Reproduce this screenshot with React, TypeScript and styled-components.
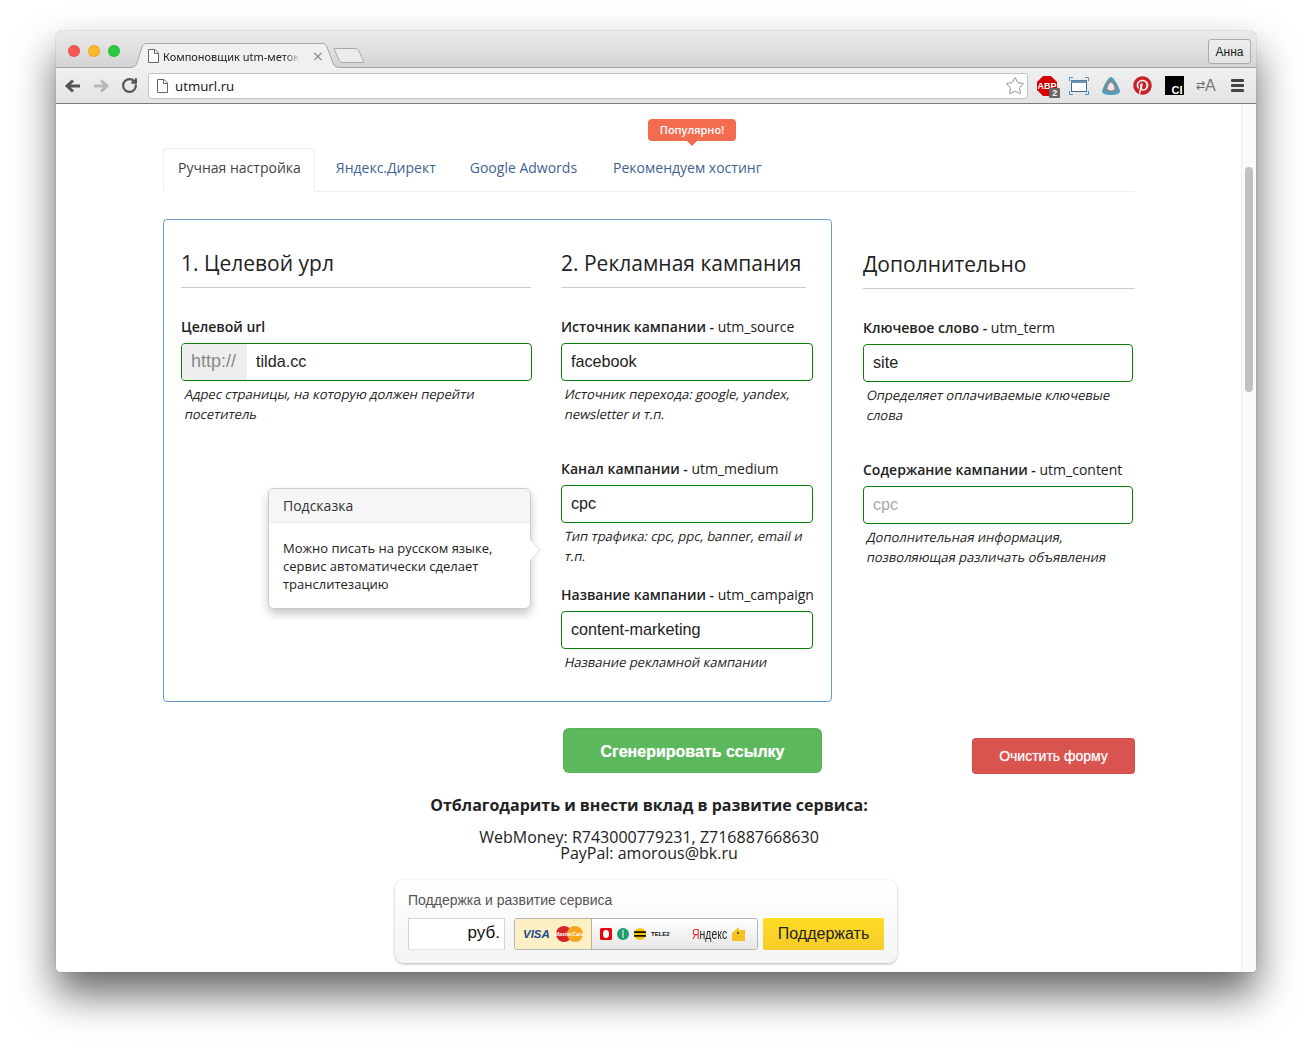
import styled, { createGlobalStyle } from "styled-components";
import { RotateCw, Star } from "lucide-react";
import { FaPinterest } from "react-icons/fa";

const GlobalStyle = createGlobalStyle`
  html, body {
    margin: 0;
    padding: 0;
    height: 1052px;
    overflow: hidden;
    background: #fff;
    font-family: "Open Sans", sans-serif;
    color: #222;
  }
  * { box-sizing: border-box; }
`;

const Page = styled.div`
  padding: 31px 56px 0;
`;

const Window = styled.div`
  width: 1200px;
  height: 941px;
  display: flex;
  flex-direction: column;
  border-radius: 6px 6px 4px 4px;
  overflow: hidden;
  background: #fff;
  box-shadow: 0 22px 40px rgba(0, 0, 0, 0.6), 0 0 1px rgba(0, 0, 0, 0.6);
`;

const TitleBar = styled.div`
  height: 37px;
  flex: none;
  display: flex;
  align-items: flex-start;
  padding-left: 12px;
  background: linear-gradient(#ebebeb, #d4d4d4);
  border-bottom: 1px solid #a6a6a6;
`;

const Lights = styled.div`
  display: flex;
  gap: 8px;
  margin-top: 14px;
`;

const Light = styled.span<{ $color: string }>`
  width: 12px;
  height: 12px;
  border-radius: 50%;
  background: ${(p) => p.$color};
  box-shadow: inset 0 0 0 1px rgba(0, 0, 0, 0.08);
`;

const BrowserTab = styled.div`
  position: relative;
  width: 210px;
  height: 25px;
  margin: 12px 0 0 10px;
  display: flex;
  align-items: center;
  padding: 1px 0 0 18px;
`;

const TabShape = styled.svg`
  position: absolute;
  left: 0;
  top: 0;
`;

const TabTitle = styled.span`
  position: relative;
  width: 138px;
  margin-left: 4px;
  overflow: hidden;
  white-space: nowrap;
  font: 11px "Noto Sans", sans-serif;
  color: #222;
  -webkit-mask-image: linear-gradient(to right, #000 88%, transparent);
  mask-image: linear-gradient(to right, #000 88%, transparent);
`;

const TabClose = styled.span`
  position: relative;
  margin-left: 11px;
  font: 14px "DejaVu Sans", sans-serif;
  color: #888;
`;

const NewTab = styled.svg`
  margin: 16px 0 0 -7px;
  position: relative;
`;

const UserButton = styled.div`
  margin: 8px 5px 0 auto;
  width: 43px;
  height: 25px;
  display: flex;
  align-items: center;
  justify-content: center;
  border: 1px solid #aaa;
  border-radius: 3px;
  font: 12px "Liberation Sans", sans-serif;
  color: #222;
  background: linear-gradient(#efefef, #e3e3e3);
`;

const ToolBar = styled.div`
  height: 36px;
  flex: none;
  display: flex;
  align-items: center;
  padding: 0 0 0 3px;
  background: linear-gradient(#f0f0f0, #e4e4e4);
  border-bottom: 1px solid #7d7d7d;
`;

const NavIcon = styled.span`
  width: 28px;
  height: 20px;
  display: flex;
  align-items: center;
  justify-content: center;
`;

const Omnibox = styled.div`
  width: 880px;
  height: 26px;
  margin-left: 5px;
  display: flex;
  align-items: center;
  padding: 0 2px 0 8px;
  background: #fff;
  border: 1px solid #c4c4c4;
  border-radius: 3px;
  font: 13.3px "Open Sans", sans-serif;
  color: #111;
`;

const Url = styled.span`
  margin-left: 7px;
  flex: 1;
`;

const Extensions = styled.div`
  display: flex;
  align-items: center;
  margin-left: 3.5px;
`;

const Ext = styled.span`
  position: relative;
  width: 31.7px;
  height: 24px;
  display: flex;
  align-items: center;
  justify-content: center;
  color: #cb2027;
`;

const AbpBadge = styled.span`
  position: absolute;
  right: 3px;
  bottom: 0;
  width: 11px;
  height: 10px;
  background: #666;
  border-radius: 1px;
  color: #fff;
  font: bold 9px/10px "Liberation Sans", sans-serif;
  text-align: center;
`;

const CiBadge = styled.span`
  width: 19px;
  height: 19px;
  display: flex;
  align-items: flex-end;
  justify-content: flex-end;
  padding-right: 1px;
  background: #000;
  color: #fff;
  font: bold 11px/9px "Liberation Sans", sans-serif;
`;

const Translate = styled.span`
  display: flex;
  align-items: center;
  font: 16px "Liberation Sans", sans-serif;
  color: #777;
  white-space: nowrap;
`;

const TranslateArrows = styled.span`
  font-size: 11px;
  color: #666;
`;

const Burger = styled.span`
  width: 13px;
  margin-left: 1px;
  display: flex;
  flex-direction: column;
  gap: 2px;
`;

const BurgerBar = styled.span`
  height: 3px;
  border-radius: 1px;
  background: #444;
`;

const Viewport = styled.div`
  flex: 1;
  min-height: 0;
  display: flex;
`;

const Content = styled.div`
  flex: 1;
  min-width: 0;
  padding: 44px 106px 0 107px;
`;

const ScrollTrack = styled.div`
  width: 15px;
  flex: none;
  padding: 63px 3px 0 3px;
  background: #fafafa;
  border-left: 1px solid #eee;
`;

const ScrollThumb = styled.div`
  height: 225px;
  border-radius: 4px;
  background: #c1c1c1;
`;

const Tabs = styled.div`
  position: relative;
  height: 44px;
  display: flex;
  border-bottom: 1px solid #eee;
`;

const TabLink = styled.a<{ $active?: boolean; $gap: number }>`
  height: ${(p) => (p.$active ? "44px" : "43px")};
  margin-right: ${(p) => p.$gap}px;
  padding: ${(p) => (p.$active ? "0 13px 5px 14px" : "0 15px 4px")};
  display: flex;
  align-items: center;
  font-size: 14px;
  color: ${(p) => (p.$active ? "#444" : "#3f6391")};
  background: #fff;
  border: 1px solid ${(p) => (p.$active ? "#eee" : "transparent")};
  border-bottom-color: ${(p) => (p.$active ? "#fff" : "transparent")};
  border-radius: 4px 4px 0 0;
`;

const PopularBadge = styled.span`
  position: absolute;
  left: 485px;
  top: -29px;
  width: 88px;
  height: 22px;
  padding-bottom: 2px;
  display: flex;
  align-items: center;
  justify-content: center;
  border-radius: 4px;
  background: #f46c50;
  color: #fff;
  font-size: 11px;
  font-weight: 600;

  &::after {
    content: "";
    position: absolute;
    left: 39px;
    bottom: -5px;
    border: solid transparent;
    border-width: 5px 5px 0;
    border-top-color: #f46c50;
  }
`;

const FormArea = styled.div`
  margin-top: 27px;
  display: flex;
  align-items: flex-start;
`;

const MainBox = styled.div`
  position: relative;
  width: 669px;
  height: 483px;
  padding: 0 0 0 17px;
  display: flex;
  gap: 30px;
  border: 1px solid #6b9bc8;
  border-radius: 4px;
`;

const Column = styled.div<{ $width: number; $side?: boolean }>`
  width: ${(p) => p.$width}px;
  flex: none;
  margin-left: ${(p) => (p.$side ? "31px" : "0")};
  padding-top: ${(p) => (p.$side ? "2px" : "0")};
`;

const Heading = styled.h3<{ $width?: number }>`
  margin: 0 0 29px;
  width: ${(p) => (p.$width ? `${p.$width}px` : "100%")};
  height: 68px;
  padding-top: 27px;
  font-size: 21px;
  font-weight: 400;
  line-height: 33px;
  color: #222;
  white-space: nowrap;
  border-bottom: 1px solid #ccc;
`;

const Field = styled.div<{ $gap: number }>`
  margin-bottom: ${(p) => p.$gap}px;
`;

const Label = styled.div`
  height: 20px;
  margin-bottom: 6px;
  font-size: 14px;
  line-height: 20px;
  white-space: nowrap;
  color: #222;
`;

const LabelStrong = styled.b`
  font-weight: 600;
`;

const InputFrame = styled.div<{ $width?: number }>`
  width: ${(p) => (p.$width ? `${p.$width}px` : "100%")};
  height: 38px;
  display: flex;
  overflow: hidden;
  border: 1px solid #0c800c;
  border-radius: 4px;
  background: #fff;
`;

const Addon = styled.span`
  width: 65px;
  flex: none;
  display: flex;
  align-items: center;
  padding: 0 0 2px 9px;
  background: #eee;
  color: #888;
  font: 18px "Liberation Sans", sans-serif;
`;

const TextInput = styled.input`
  flex: 1;
  min-width: 0;
  height: 100%;
  padding: 0 9px 2px;
  border: 0;
  outline: 0;
  background: transparent;
  font: 16.2px "Liberation Sans", sans-serif;
  color: #222;

  &::placeholder {
    color: #aaa;
    opacity: 1;
  }
`;

const Help = styled.div`
  margin: 3px 0 0;
  padding-left: 3.5px;
  font-size: 13px;
  line-height: 20px;
  color: #222;
`;

// the reference text is a slanted upright face, not the real italic
const HelpLine = styled.span`
  display: block;
  white-space: nowrap;
  transform: skewX(-12deg);
  transform-origin: left center;
`;

const Popover = styled.div`
  position: absolute;
  left: 104px;
  top: 268px;
  width: 263px;
  height: 121px;
  background: #fff;
  border: 1px solid #ccc;
  border-radius: 6px;
  box-shadow: 0 5px 10px rgba(0, 0, 0, 0.22);

  &::before {
    content: "";
    position: absolute;
    right: -11px;
    top: 50px;
    border: solid transparent;
    border-width: 11px 0 11px 11px;
    border-left-color: #ddd;
  }

  &::after {
    content: "";
    position: absolute;
    right: -10px;
    top: 51px;
    border: solid transparent;
    border-width: 10px 0 10px 10px;
    border-left-color: #fff;
  }
`;

const PopoverTitle = styled.div`
  height: 34px;
  padding: 0 14px;
  font-size: 14px;
  line-height: 33px;
  color: #333;
  background: #f6f6f6;
  border-bottom: 1px solid #ebebeb;
  border-radius: 5px 5px 0 0;
`;

const PopoverBody = styled.div`
  padding: 16px 14px;
  font-size: 13px;
  line-height: 18px;
  color: #222;
`;

const Actions = styled.div`
  margin-top: 26px;
  display: flex;
  align-items: flex-start;
`;

const Button = styled.div<{ $color: string; $big?: boolean }>`
  display: flex;
  align-items: center;
  justify-content: center;
  width: ${(p) => (p.$big ? "259px" : "163px")};
  height: ${(p) => (p.$big ? "45px" : "36px")};
  margin: ${(p) => (p.$big ? "0 0 0 400px" : "10px 0 0 auto")};
  padding-top: ${(p) => (p.$big ? "3px" : "0")};
  background: ${(p) => p.$color};
  border-radius: ${(p) => (p.$big ? "6px" : "4px")};
  color: #fff;
  font-family: "Liberation Sans", sans-serif;
  font-size: ${(p) => (p.$big ? "16px" : "14px")};
  font-weight: ${(p) => (p.$big ? 700 : 400)};
  text-shadow: 0 0 1px rgba(255, 255, 255, 0.6);
  box-shadow: inset 0 0 0 1px rgba(0, 0, 0, 0.04);
`;

const Thanks = styled.div`
  margin-top: 20px;
  font-size: 16px;
  font-weight: 700;
  line-height: 22px;
  text-align: center;
  color: #222;
`;

const Wallets = styled.div`
  margin-top: 13px;
  font-size: 16px;
  line-height: 16px;
  text-align: center;
  color: #222;
`;

const Widget = styled.div`
  width: 502px;
  height: 83px;
  margin: 19px 0 0 232px;
  padding: 11px 13px 0;
  border-radius: 9px;
  background: linear-gradient(#fff, #f4f4f4);
  box-shadow: 0 1px 3px rgba(0, 0, 0, 0.3);
`;

const WidgetTitle = styled.div`
  font: 14px/18px "Liberation Sans", sans-serif;
  color: #555;
`;

const WidgetRow = styled.div`
  margin-top: 9px;
  height: 32px;
  display: flex;
`;

const Amount = styled.div`
  width: 97px;
  padding: 3px 4px 0 0;
  text-align: right;
  background: #fff;
  border: 1px solid #d4d4d4;
  border-bottom-color: #e6e6e6;
  font: 17px/22px "Liberation Sans", sans-serif;
  color: #111;
`;

const PaySwitch = styled.div`
  width: 244px;
  margin-left: 9px;
  display: flex;
  border: 1px solid #b5b5b5;
  border-radius: 3px;
  overflow: hidden;
`;

const PayCards = styled.div`
  width: 77px;
  display: flex;
  align-items: center;
  padding-left: 8px;
  gap: 5px;
  background: #fdf0c5;
  border-right: 1px solid #b8b09a;
`;

const Visa = styled.span`
  font: italic bold 11.500px "Liberation Sans", sans-serif;
  color: #1a4a8a;
`;

const PayOther = styled.div`
  flex: 1;
  display: flex;
  align-items: center;
  padding-left: 8px;
  background: linear-gradient(#fff, #e6e6e6);
`;

const PayLogo = styled.svg<{ $gap?: number }>`
  flex: none;
  margin-left: ${(p) => p.$gap ?? 0}px;
`;

const Tele2 = styled.span`
  margin-left: 5px;
  width: 18px;
  font: bold 6px "Liberation Sans", sans-serif;
  color: #111;
`;

const Yandex = styled.span`
  margin-left: 23px;
  width: 35px;
  font: 14.500px "Liberation Sans", sans-serif;
  transform: scaleX(0.72);
  transform-origin: left;
  color: #222;
  white-space: nowrap;
`;

const YandexFirst = styled.span`
  color: #e52620;
`;

const PayButton = styled.div`
  width: 121px;
  margin-left: 5px;
  display: flex;
  align-items: center;
  justify-content: center;
  border-radius: 2px;
  background: linear-gradient(#ffdc24, #f5cc2a);
  font: 16px "Liberation Sans", sans-serif;
  color: #222;
`;

const DocIcon = () => (
  <svg width="11" height="14" viewBox="0 0 11 14" style={{ position: "relative", flex: "none" }}>
    <path d="M.5.5h6.500l3.500 3.500v9.500H.5z" fill="#fff" stroke="#666" />
    <path d="M6.500.5v4h4" fill="none" stroke="#666" />
  </svg>
);

const FormField = ({ strong, rest, value, placeholder, width, gap, help }: {
  strong: string;
  rest?: string;
  value?: string;
  placeholder?: string;
  width?: number;
  gap: number;
  help: string[];
}) => (
  <Field $gap={gap}>
    <Label>
      <LabelStrong>{strong}</LabelStrong>
      {rest}
    </Label>
    <InputFrame $width={width}>
      <TextInput readOnly value={value} placeholder={placeholder} />
    </InputFrame>
    <Help>
      {help.map((line) => (
        <HelpLine key={line}>{line}</HelpLine>
      ))}
    </Help>
  </Field>
);

const App = () => {
  return (
    <>
      <GlobalStyle />
      <Page>
        <Window>
          <TitleBar>
            <Lights>
              <Light $color="#f8584f" />
              <Light $color="#fdb827" />
              <Light $color="#2bc840" />
            </Lights>
            <BrowserTab>
              <TabShape width="210" height="25" viewBox="0 0 210 25">
                <path
                  d="M0 24.500C4 24.500 6 23 7 20L12 4C13 1.500 14 .5 17 .5H192C195 .5 196 1.500 197 4L203 20C204 23 206 24.500 210 24.500V25H0Z"
                  fill="#f0f0f0"
                />
                <path
                  d="M0 24.500C4 24.500 6 23 7 20L12 4C13 1.500 14 .5 17 .5H192C195 .5 196 1.500 197 4L203 20C204 23 206 24.500 210 24.500"
                  fill="none"
                  stroke="#a6a6a6"
                />
              </TabShape>
              <DocIcon />
              <TabTitle>Компоновщик utm-меток</TabTitle>
              <TabClose>×</TabClose>
            </BrowserTab>
            <NewTab width="32" height="17" viewBox="0 0 32 17">
              <path d="M1 1.500H22C24 1.500 25 2.500 26 4L31 15.500H10C8 15.500 7 14.500 6 13Z" fill="#ececec" stroke="#a9a9a9" />
            </NewTab>
            <UserButton>Анна</UserButton>
          </TitleBar>
          <ToolBar>
            <NavIcon>
              <svg width="18" height="16" viewBox="0 0 18 16">
                <path d="M16 8H4M9 2.500L3 8l6 5.500" fill="none" stroke="#555" strokeWidth="3" />
              </svg>
            </NavIcon>
            <NavIcon>
              <svg width="18" height="16" viewBox="0 0 18 16">
                <path d="M2 8h12M9 2.500L15 8l-6 5.500" fill="none" stroke="#b8b8b8" strokeWidth="3" />
              </svg>
            </NavIcon>
            <NavIcon>
              <RotateCw size={17} color="#555" strokeWidth={3.2} />
            </NavIcon>
            <Omnibox>
              <DocIcon />
              <Url>utmurl.ru</Url>
              <Star size={20} color="#8c8c8c" strokeWidth={1.2} />
            </Omnibox>
            <Extensions>
              <Ext>
                <svg width="20" height="20" viewBox="0 0 20 20">
                  <path d="M6 0h8l6 6v8l-6 6H6l-6-6V6z" fill="#d40000" />
                  <text x="10" y="12.500" textAnchor="middle" fontFamily="Liberation Sans" fontWeight="700" fontSize="9" fill="#fff">
                    ABP
                  </text>
                </svg>
                <AbpBadge>2</AbpBadge>
              </Ext>
              <Ext>
                <svg width="20" height="18" viewBox="0 0 20 18">
                  <path d="M.5 4V.5H4M16 .5h3.500V4M.5 14v3.500H4M16 17.500h3.500V14" fill="none" stroke="#4a90c8" />
                  <rect x="2.500" y="3.500" width="15" height="11" fill="#fff" stroke="#3d6f99" />
                  <rect x="2.500" y="3.500" width="15" height="2.500" fill="#6d94b5" />
                </svg>
              </Ext>
              <Ext>
                <svg width="20" height="20" viewBox="0 0 20 20">
                  <path d="M10 1C13 1 19 13 19 15.500C19 18 14 19 10 19S1 18 1 15.500C1 13 7 1 10 1Z" fill="#4aa0bf" />
                  <path d="M10 4C12.500 4 16 10 16 12.500C16 15.500 12.500 16.500 10 16.500S4 15.500 4 12.500C4 10 7.500 4 10 4Z" fill="#888" />
                  <path d="M10 6.500C11.500 6.500 13.500 10.500 13.500 12.500C13.500 14 11.500 14.500 10 14.500S6.500 14 6.500 12.500C6.500 10.500 8.500 6.500 10 6.500Z" fill="#e8e8e8" />
                </svg>
              </Ext>
              <Ext>
                <FaPinterest size={19} />
              </Ext>
              <Ext>
                <CiBadge>CI</CiBadge>
              </Ext>
              <Ext>
                <Translate>
                  <TranslateArrows>⇄</TranslateArrows>A
                </Translate>
              </Ext>
              <Ext>
                <Burger>
                  <BurgerBar />
                  <BurgerBar />
                  <BurgerBar />
                </Burger>
              </Ext>
            </Extensions>
          </ToolBar>
          <Viewport>
            <Content>
              <Tabs>
                <TabLink $active $gap={5}>Ручная настройка</TabLink>
                <TabLink $gap={2}>Яндекс.Директ</TabLink>
                <TabLink $gap={4}>Google Adwords</TabLink>
                <TabLink $gap={2}>Рекомендуем хостинг</TabLink>
                <PopularBadge>Популярно!</PopularBadge>
              </Tabs>
              <FormArea>
                <MainBox>
                  <Column $width={350}>
                    <Heading>1. Целевой урл</Heading>
                    <Field $gap={0}>
                      <Label>
                        <LabelStrong>Целевой url</LabelStrong>
                      </Label>
                      <InputFrame $width={351}>
                        <Addon>http://</Addon>
                        <TextInput readOnly value="tilda.cc" />
                      </InputFrame>
                      <Help>
                        <HelpLine>Адрес страницы, на которую должен перейти</HelpLine>
                        <HelpLine>посетитель</HelpLine>
                      </Help>
                    </Field>
                  </Column>
                  <Column $width={252}>
                    <Heading $width={245}>2. Рекламная кампания</Heading>
                    <FormField
                      gap={35}
                      strong="Источник кампании - "
                      rest="utm_source"
                      value="facebook"
                      help={["Источник перехода: google, yandex,", "newsletter и т.п."]}
                    />
                    <FormField
                      gap={19}
                      strong="Канал кампании - "
                      rest="utm_medium"
                      value="cpc"
                      help={["Тип трафика: cpc, ppc, banner, email и", "т.п."]}
                    />
                    <FormField
                      gap={0}
                      strong="Название кампании - "
                      rest="utm_campaign"
                      value="content-marketing"
                      help={["Название рекламной кампании"]}
                    />
                  </Column>
                  <Popover>
                    <PopoverTitle>Подсказка</PopoverTitle>
                    <PopoverBody>
                      Можно писать на русском языке,
                      <br />
                      сервис автоматически сделает
                      <br />
                      транслитезацию
                    </PopoverBody>
                  </Popover>
                </MainBox>
                <Column $width={272} $side>
                  <Heading>Дополнительно</Heading>
                  <FormField
                    gap={35}
                    width={270}
                    strong="Ключевое слово - "
                    rest="utm_term"
                    value="site"
                    help={["Определяет оплачиваемые ключевые", "слова"]}
                  />
                  <FormField
                    gap={0}
                    width={270}
                    strong="Содержание кампании - "
                    rest="utm_content"
                    placeholder="cpc"
                    help={["Дополнительная информация,", "позволяющая различать объявления"]}
                  />
                </Column>
              </FormArea>
              <Actions>
                <Button $big $color="#5cb85c">Сгенерировать ссылку</Button>
                <Button $color="#d9534f">Очистить форму</Button>
              </Actions>
              <Thanks>Отблагодарить и внести вклад в развитие сервиса:</Thanks>
              <Wallets>
                WebMoney: R743000779231, Z716887668630
                <br />
                PayPal: amorous@bk.ru
              </Wallets>
              <Widget>
                <WidgetTitle>Поддержка и развитие сервиса</WidgetTitle>
                <WidgetRow>
                  <Amount>руб.</Amount>
                  <PaySwitch>
                    <PayCards>
                      <Visa>VISA</Visa>
                      <svg width="29" height="16" viewBox="0 0 29 16">
                        <circle cx="9" cy="8" r="8" fill="#d9222a" />
                        <circle cx="20" cy="8" r="8" fill="#f4a71d" />
                        <text x="14.500" y="10" textAnchor="middle" fontFamily="Liberation Sans" fontWeight="700" fontStyle="italic" fontSize="5.500" fill="#fff">
                          MasterCard
                        </text>
                      </svg>
                    </PayCards>
                    <PayOther>
                      <PayLogo width="12" height="12" viewBox="0 0 12 12">
                        <rect width="12" height="12" rx="1.500" fill="#e30611" />
                        <ellipse cx="6" cy="6" rx="3" ry="4" fill="#fff" />
                      </PayLogo>
                      <PayLogo $gap={5} width="12" height="12" viewBox="0 0 12 12">
                        <circle cx="6" cy="6" r="6" fill="#1f9d6c" />
                        <rect x="5.500" y="2" width="1" height="8" fill="#fff" />
                      </PayLogo>
                      <PayLogo $gap={5} width="12" height="12" viewBox="0 0 12 12">
                        <circle cx="6" cy="6" r="6" fill="#f7c600" />
                        <path d="M0 4.200h12M0 7.800h12" stroke="#111" strokeWidth="1.800" />
                      </PayLogo>
                      <Tele2>TELE2</Tele2>
                      <Yandex>
                        <YandexFirst>Я</YandexFirst>ндекс
                      </Yandex>
                      <PayLogo $gap={5} width="13" height="14" viewBox="0 0 13 14">
                        <path d="M0 6L7 0v3h6v11H0z" fill="#f5c21f" />
                        <circle cx="6" cy="6" r="1" fill="#333" />
                      </PayLogo>
                    </PayOther>
                  </PaySwitch>
                  <PayButton>Поддержать</PayButton>
                </WidgetRow>
              </Widget>
            </Content>
            <ScrollTrack>
              <ScrollThumb />
            </ScrollTrack>
          </Viewport>
        </Window>
      </Page>
    </>
  );
};

export default App;
